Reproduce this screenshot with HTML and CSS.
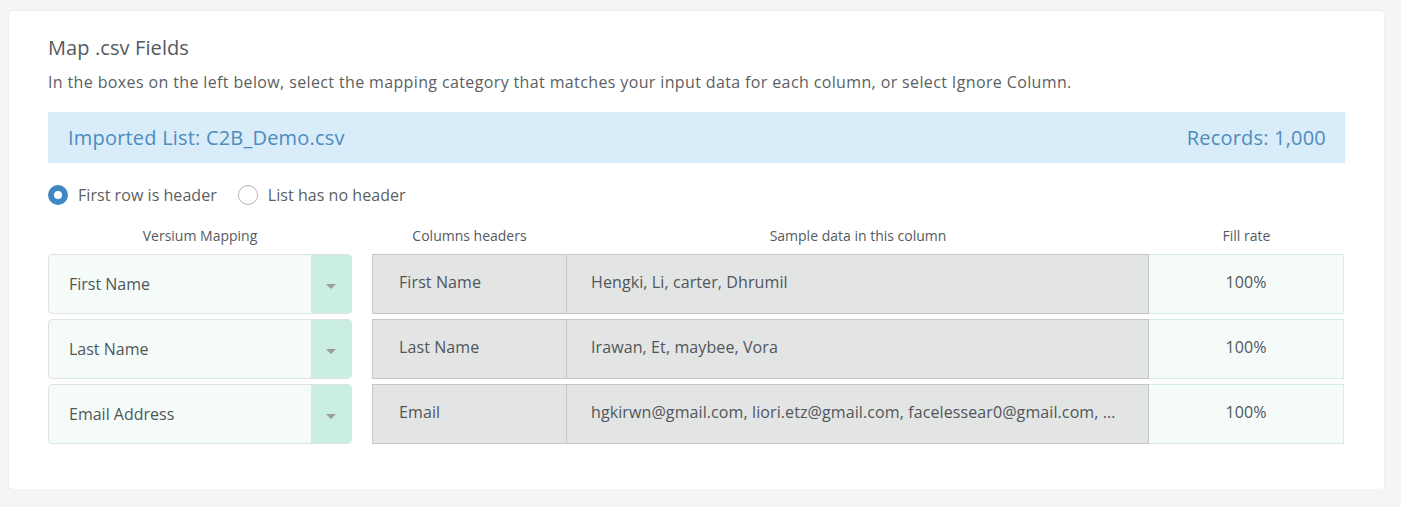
FILE: index.html
```html
<!DOCTYPE html>
<html>
<head>
<meta charset="utf-8">
<link rel="stylesheet" href="styles.css">
</head>
<body>
<div class="card">
  <h1 class="title">Map .csv Fields</h1>
  <p class="desc">In the boxes on the left below, select the mapping category that matches your input data for each column, or select Ignore Column.</p>
  <div class="listbar">
    <span>Imported List: C2B_Demo.csv</span>
    <span>Records: 1,000</span>
  </div>
  <div class="radios">
    <label class="radio"><span class="dot checked"></span>First row is header</label>
    <label class="radio"><span class="dot"></span>List has no header</label>
  </div>
  <div class="grid">
    <div class="hdr">Versium Mapping</div>
    <div></div>
    <div class="hdr">Columns headers</div>
    <div class="hdr">Sample data in this column</div>
    <div class="hdr">Fill rate</div>

    <div class="select"><span class="sel-text">First Name</span><span class="sel-btn"><span class="caret"></span></span></div>
    <div></div>
    <div class="cell colh">First Name</div>
    <div class="cell sample">Hengki, Li, carter, Dhrumil</div>
    <div class="cell fill">100%</div>

    <div class="select"><span class="sel-text">Last Name</span><span class="sel-btn"><span class="caret"></span></span></div>
    <div></div>
    <div class="cell colh">Last Name</div>
    <div class="cell sample">Irawan, Et, maybee, Vora</div>
    <div class="cell fill">100%</div>

    <div class="select"><span class="sel-text">Email Address</span><span class="sel-btn"><span class="caret"></span></span></div>
    <div></div>
    <div class="cell colh">Email</div>
    <div class="cell sample">hgkirwn@gmail.com, liori.etz@gmail.com, facelessear0@gmail.com, ...</div>
    <div class="cell fill">100%</div>
  </div>
</div>
</body>
</html>
```

FILE: styles.css
```css
* { box-sizing: border-box; }
html, body { margin: 0; padding: 0; }
body {
  background: #f4f5f7;
  font-family: "Open Sans", "Noto Sans", sans-serif;
  color: #555a5e;
  padding: 11px 17px 0 9px;
}
.card {
  background: #fff;
  border-radius: 4px;
  box-shadow: 0 0 3px rgba(0,0,0,0.08);
  width: 1375px;
  height: 478px;
  padding: 24px 39px;
  display: flex;
  flex-direction: column;
}
.title {
  margin: 0;
  font-size: 20px;
  line-height: 26px;
  font-weight: 400;
  color: #555a5e;
  letter-spacing: 0.1px;
}
.desc {
  margin: 10px 0 0;
  font-size: 16px;
  line-height: 22px;
  color: #5a5f63;
  letter-spacing: 0.37px;
  white-space: nowrap;
}
.listbar {
  margin-top: 19px;
  height: 51px;
  background: #d9ecfa;
  display: flex;
  justify-content: space-between;
  align-items: center;
  padding: 0 19px 0 20px;
  font-size: 20px;
  color: #4d8cbc;
  letter-spacing: 0.2px;
}
.radios {
  margin-top: 22px;
  display: flex;
  gap: 21px;
  height: 20px;
  align-items: center;
}
.radio {
  display: flex;
  align-items: center;
  font-size: 16px;
  color: #5a5f63;
  letter-spacing: 0.05px;
}
.dot {
  width: 20px;
  height: 20px;
  border-radius: 50%;
  border: 1px solid #b5b5b5;
  background: #fff;
  margin-right: 10px;
}
.dot.checked {
  border: 6px solid #3f88c3;
  background: #fff;
}
.grid {
  margin-top: 21px;
  display: grid;
  grid-template-columns: 304px 20px 195px 582px 195px;
  grid-template-rows: 23px repeat(3, 60px);
  row-gap: 5px;
}
.hdr {
  font-size: 14px;
  line-height: 20px;
  text-align: center;
  color: #555a5e;
  align-self: start;
}
.select {
  display: flex;
  border: 1px solid #dde3e0;
  border-radius: 4px;
  background: #f4fbf8;
  overflow: hidden;
}
.sel-text {
  flex: 1;
  display: flex;
  align-items: center;
  padding-left: 20px;
  font-size: 16px;
  color: #50565a;
}
.sel-btn {
  width: 40px;
  background: #caeedf;
  display: flex;
  align-items: center;
  justify-content: center;
  padding-top: 4px;
}
.caret {
  width: 0;
  height: 0;
  border-left: 5px solid transparent;
  border-right: 5px solid transparent;
  border-top: 5px solid #9a9d9f;
}
.cell {
  display: flex;
  align-items: center;
  font-size: 16px;
  color: #50565a;
  padding-bottom: 4px;
  letter-spacing: 0.1px;
}
.colh {
  background: #e3e4e4;
  border: 1px solid #c5c6c6;
  padding-left: 26px;
}
.sample {
  background: #e3e4e4;
  border-top: 1px solid #c5c6c6;
  border-bottom: 1px solid #c5c6c6;
  border-right: 1px solid #bfc8c4;
  padding-left: 24px;
  white-space: nowrap;
  overflow: hidden;
}
.fill {
  background: #f4fbf9;
  border: 1px solid #d3ede4;
  border-left: none;
  justify-content: center;
}
```
